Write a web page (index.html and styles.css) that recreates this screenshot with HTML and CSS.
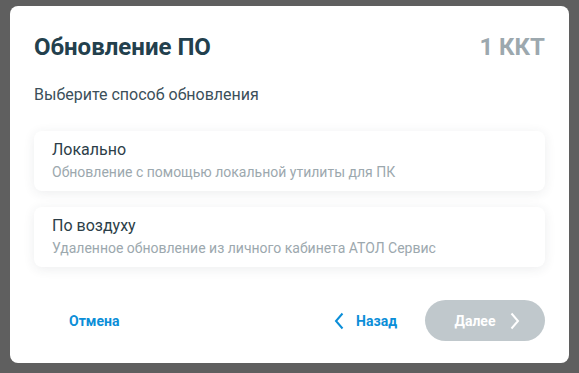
FILE: index.html
```html
<!DOCTYPE html>
<html lang="ru">
<head>
    <meta charset="UTF-8">
    <title>Обновление ПО</title>
    <link rel="stylesheet" href="styles.css">
</head>
<body>
    <div class="dialog">
        <div class="dialog-header">
            <h1 class="dialog-title">Обновление ПО</h1>
            <span class="dialog-count">1 ККТ</span>
        </div>
        <p class="dialog-subtitle">Выберите способ обновления</p>

        <div class="options">
            <div class="option">
                <div class="option-title">Локально</div>
                <div class="option-desc">Обновление с помощью локальной утилиты для ПК</div>
            </div>
            <div class="option">
                <div class="option-title">По воздуху</div>
                <div class="option-desc">Удаленное обновление из личного кабинета АТОЛ Сервис</div>
            </div>
        </div>

        <div class="dialog-footer">
            <button class="btn-text">Отмена</button>
            <div class="footer-right">
                <button class="btn-text btn-back">
                    <svg width="10" height="18" viewBox="0 0 10 18"><path d="M8.5 1.5 L2 9 L8.5 16.5" fill="none" stroke="#0b8ed8" stroke-width="2"/></svg>
                    Назад
                </button>
                <button class="btn-next" disabled>
                    Далее
                    <svg width="10" height="18" viewBox="0 0 10 18"><path d="M1.5 1.5 L8 9 L1.5 16.5" fill="none" stroke="#fff" stroke-width="2"/></svg>
                </button>
            </div>
        </div>
    </div>
</body>
</html>
```

FILE: styles.css
```css
body {
    margin: 0;
    padding: 6px 10px 0 10px;
    background-color: #5f5f5f;
    font-family: Roboto, "Noto Sans", sans-serif;
    height: 373px;
    box-sizing: border-box;
    overflow: hidden;
}
.dialog {
    background-color: #fff;
    border-radius: 8px;
    width: 559px;
    height: 357px;
    box-sizing: border-box;
    padding: 27px 24px 22px 24px;
    display: flex;
    flex-direction: column;
}
.dialog-header {
    display: flex;
    justify-content: space-between;
    align-items: center;
}
.dialog-title {
    margin: 0;
    font-size: 24px;
    font-weight: 700;
    color: #23404d;
    line-height: 28px;
}
.dialog-count {
    font-size: 24px;
    font-weight: 700;
    color: #9ca8ae;
    line-height: 28px;
}
.dialog-subtitle {
    margin: 24px 0 0 0;
    font-size: 16px;
    color: #3b4f5a;
    line-height: 20px;
}
.options {
    display: flex;
    flex-direction: column;
    gap: 16px;
    margin-top: 26px;
}
.option {
    background-color: #fff;
    border-radius: 8px;
    box-shadow: 0 2px 12px rgba(40, 60, 70, 0.09);
    padding: 9px 18px 10px 18px;
    height: 60px;
    box-sizing: border-box;
}
.option-title {
    font-size: 16px;
    color: #2c3e48;
    line-height: 20px;
}
.option-desc {
    font-size: 14px;
    color: #9ca8ae;
    line-height: 18px;
    margin-top: 3px;
}
.dialog-footer {
    margin-top: auto;
    display: flex;
    justify-content: space-between;
    align-items: center;
}
.footer-right {
    display: flex;
    align-items: center;
    gap: 28px;
}
button {
    font-family: Roboto, "Noto Sans", sans-serif;
    border: none;
    cursor: pointer;
}
.btn-text {
    background: none;
    color: #0b8ed8;
    font-size: 14px;
    font-weight: 700;
    padding: 10px 35px;
}
.btn-back {
    display: flex;
    align-items: center;
    gap: 12px;
    padding: 10px 0;
}
.btn-next {
    display: flex;
    align-items: center;
    justify-content: center;
    gap: 14px;
    width: 120px;
    height: 41px;
    border-radius: 21px;
    background-color: #c0c8cc;
    color: #fff;
    font-size: 14px;
    font-weight: 700;
    padding: 0 0 0 4px;
}
```
